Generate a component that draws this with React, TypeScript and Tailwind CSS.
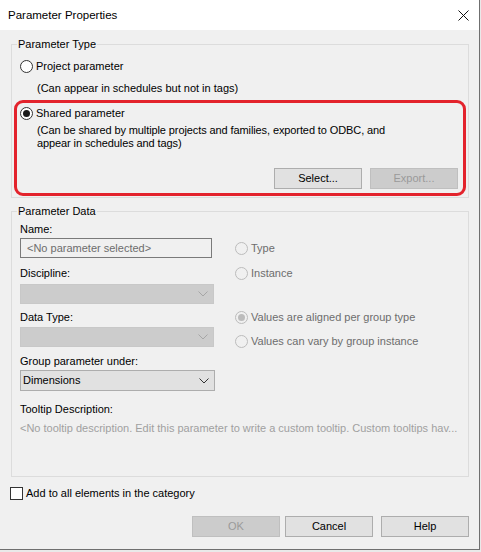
import React from "react";

// Windows-style "Parameter Properties" dialog

type RadioProps = {
  label: string;
  checked?: boolean;
  disabled?: boolean;
};

function Radio({ label, checked = false, disabled = false }: RadioProps) {
  return (
    <div className="flex items-center h-[16px]">
      <span
        className={
          "flex items-center justify-center w-[13px] h-[13px] rounded-full border shrink-0 " +
          (disabled ? "border-[#bcbcbc] bg-[#f0f0f0]" : "border-[#333333] bg-white")
        }
      >
        {checked && (
          <span
            className={
              "w-[7px] h-[7px] rounded-full " + (disabled ? "bg-[#bcbcbc]" : "bg-[#1a1a1a]")
            }
          />
        )}
      </span>
      <span className={"ml-[3px] leading-[14px] " + (disabled ? "text-[#6d6d6d]" : "text-black")}>
        {label}
      </span>
    </div>
  );
}

function Chevron({ color }: { color: string }) {
  return (
    <svg width="10" height="6" viewBox="0 0 10 6" className="shrink-0">
      <polyline points="0.5,0.5 5,5 9.5,0.5" fill="none" stroke={color} strokeWidth="1" />
    </svg>
  );
}

function Button({ label, disabled = false }: { label: string; disabled?: boolean }) {
  return (
    <div
      className={
        "w-[88px] h-[21px] flex items-center justify-center border " +
        (disabled
          ? "bg-[#cccccc] border-[#bfbfbf] text-[#9a9a9a]"
          : "bg-[#e1e1e1] border-[#adadad] text-black")
      }
    >
      {label}
    </div>
  );
}

export default function App() {
  return (
    <div className="w-[481px] h-[552px] bg-[#e9e9e9] font-['Liberation_Sans',Arial,sans-serif] text-[11px] text-black">
      <div className="w-[480px] h-[550px] flex flex-col border-r border-b border-[#6f6f6f] bg-[#f0f0f0]">
        {/* title bar */}
        <div className="h-[30px] bg-white flex items-center justify-between pl-[8px] pr-[10px]">
          <span className="text-[11.5px] leading-[14px]">Parameter Properties</span>
          <svg width="11" height="11" viewBox="0 0 11 11">
            <line x1="0.5" y1="0.5" x2="10.5" y2="10.5" stroke="#111" strokeWidth="1" />
            <line x1="10.5" y1="0.5" x2="0.5" y2="10.5" stroke="#111" strokeWidth="1" />
          </svg>
        </div>

        {/* body */}
        <div className="flex-1 flex flex-col pl-[11px] pr-[10px]">
          <fieldset className="mt-[7px] border border-[#dcdcdc] min-w-0">
            <legend className="ml-[5px] px-[1px] leading-[14px]">Parameter Type</legend>
            <div className="mt-[7px] pl-[8px]">
              <Radio label="Project parameter" />
            </div>
            <div className="mt-[7px] pl-[25px] leading-[14px]">
              (Can appear in schedules but not in tags)
            </div>
            <div className="mt-[5px] mb-[1px] mx-[2px] border-[3px] border-[#e3232c] rounded-[9px] pt-[2px] pl-[3px] pr-[5px] pb-[4px]">
              <Radio label="Shared parameter" checked />
              <div className="mt-[3px] ml-[17px] leading-[13px] tracking-[-0.1px]">
                (Can be shared by multiple projects and families, exported to ODBC, and
                <br />
                appear in schedules and tags)
              </div>
              <div className="mt-[18px] flex justify-end gap-[8px]">
                <Button label="Select..." />
                <Button label="Export..." disabled />
              </div>
            </div>
          </fieldset>

          <fieldset className="mt-[6px] border border-[#dcdcdc] min-w-0">
            <legend className="ml-[5px] px-[1px] leading-[14px]">Parameter Data</legend>
            <div className="flex items-start">
              <div className="pl-[8px] w-[203px] flex flex-col">
                <div className="mt-[4px] leading-[14px]">Name:</div>
                <div className="mt-[2px] w-[192px] h-[20px] border border-[#7a7a7a] bg-[#f0f0f0] pl-[6px] flex items-center text-[#6d6d6d]">
                  &lt;No parameter selected&gt;
                </div>
                <div className="mt-[8px] leading-[14px]">Discipline:</div>
                <div className="mt-[4px] w-[194px] h-[20px] bg-[#cccccc] border border-[#c8c8c8] flex items-center justify-end pr-[5px]">
                  <Chevron color="#a6a6a6" />
                </div>
                <div className="mt-[6px] leading-[14px]">Data Type:</div>
                <div className="mt-[3px] w-[194px] h-[20px] bg-[#cccccc] border border-[#c8c8c8] flex items-center justify-end pr-[5px]">
                  <Chevron color="#a6a6a6" />
                </div>
                <div className="mt-[7px] leading-[14px]">Group parameter under:</div>
                <div className="mt-[2px] w-[195px] h-[21px] bg-[#e1e1e1] border border-[#adadad] flex items-center justify-between pl-[2px] pr-[5px]">
                  <span>Dimensions</span>
                  <Chevron color="#333333" />
                </div>
              </div>
              <div className="ml-[20px] flex flex-col">
                <div className="mt-[22px]">
                  <Radio label="Type" disabled />
                </div>
                <div className="mt-[9px]">
                  <Radio label="Instance" disabled />
                </div>
                <div className="mt-[28px]">
                  <Radio label="Values are aligned per group type" checked disabled />
                </div>
                <div className="mt-[8px]">
                  <Radio label="Values can vary by group instance" disabled />
                </div>
              </div>
            </div>
            <div className="pl-[8px] mt-[11px] leading-[14px]">Tooltip Description:</div>
            <div className="pl-[8px] mt-[5px] mb-[41px] leading-[14px] text-[#a0a0a0] whitespace-nowrap overflow-hidden">
              &lt;No tooltip description. Edit this parameter to write a custom tooltip. Custom tooltips hav...
            </div>
          </fieldset>

          <div className="mt-[8px] -ml-[1px] flex items-center h-[16px]">
            <span className="w-[13px] h-[13px] border border-[#333333] bg-white shrink-0" />
            <span className="ml-[3px] leading-[14px]">Add to all elements in the category</span>
          </div>

          <div className="mt-[15px] flex justify-end">
            <Button label="OK" disabled />
            <div className="ml-[5px]">
              <Button label="Cancel" />
            </div>
            <div className="ml-[8px]">
              <Button label="Help" />
            </div>
          </div>
        </div>
      </div>
    </div>
  );
}
